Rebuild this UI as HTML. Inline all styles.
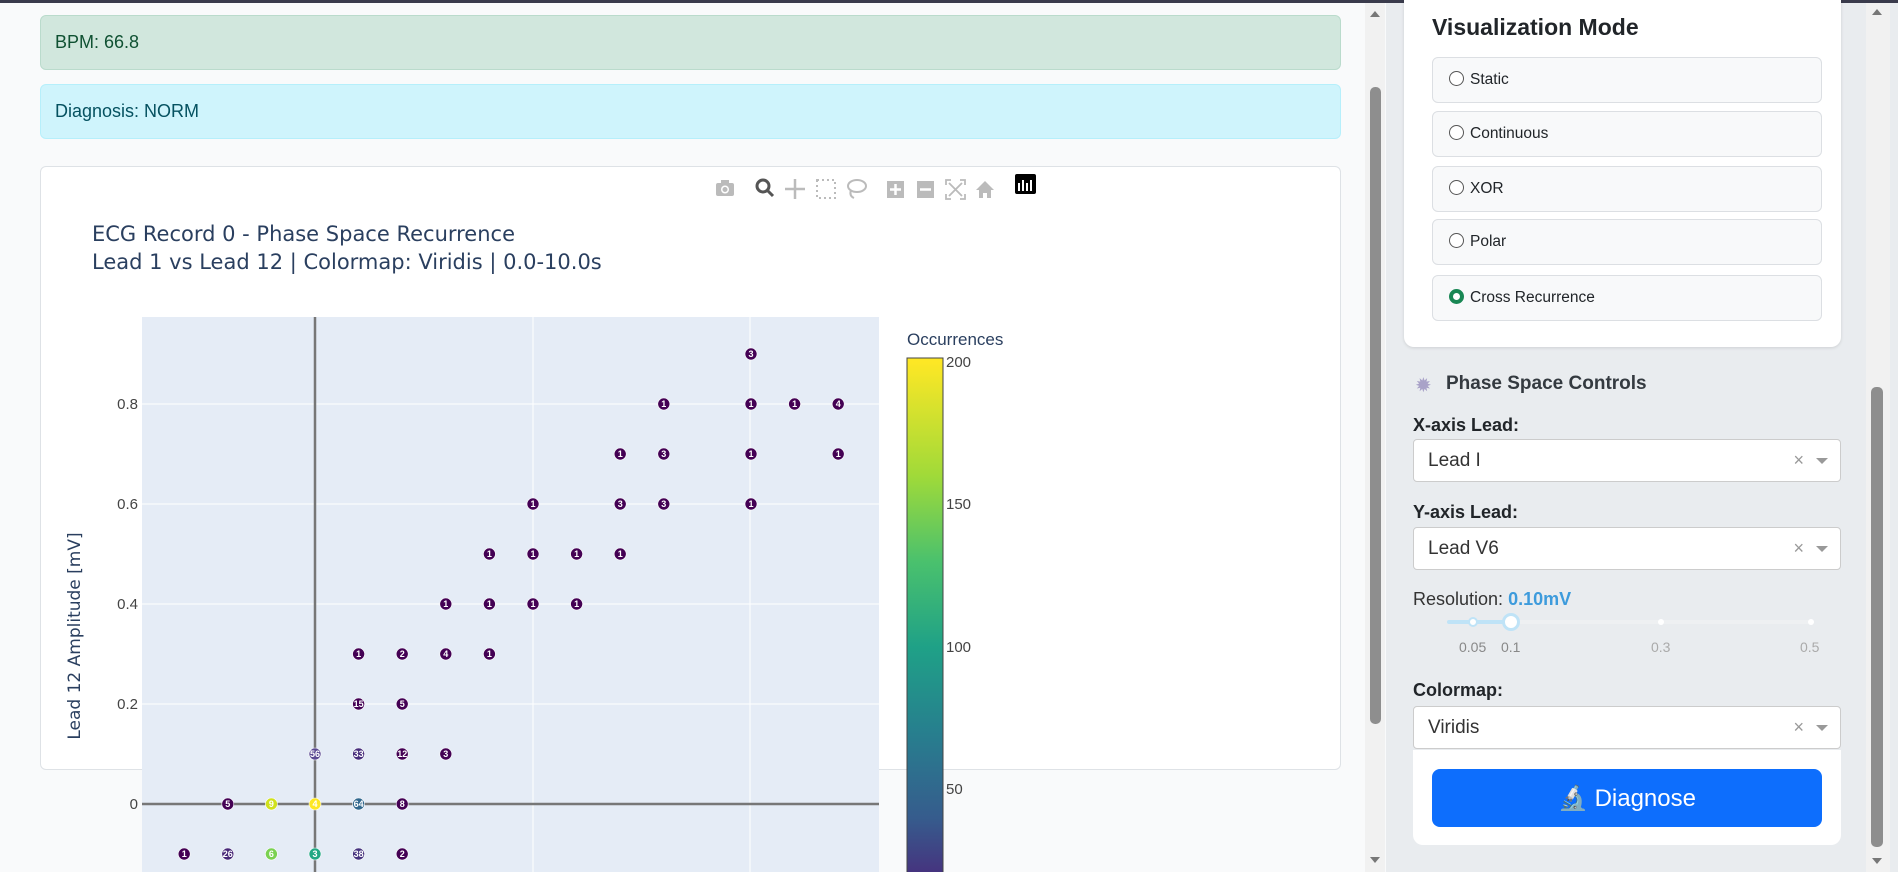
<!DOCTYPE html>
<html><head><meta charset="utf-8"><style>
*{box-sizing:border-box;margin:0;padding:0}
body{width:1898px;height:872px;overflow:hidden;background:#fff;font-family:"Liberation Sans",sans-serif;position:relative}
.abs{position:absolute}
.alert{position:absolute;left:40px;width:1301px;border-radius:6px;font-size:18px;padding-left:14px;display:flex;align-items:center}
.radio{position:absolute;left:1432px;width:390px;height:46px;border:1px solid #dcdfe3;border-radius:6px;background:#f8f9fa;font-size:15.5px;color:#212529;display:flex;align-items:center;padding-left:37px}
.radio i{position:absolute;left:16px;top:13px;width:15px;height:15px;border:1px solid #555;border-radius:50%;background:#fff}
.lbl{position:absolute;left:1413px;font-size:18px;font-weight:bold;color:#212529}
.sel{position:absolute;left:1413px;width:428px;height:43px;background:#fff;border:1px solid #ccc;border-radius:4px;font-size:19px;color:#333;padding-left:14px;display:flex;align-items:center}
.sel .x{position:absolute;right:36px;top:10px;color:#999;font-size:18px}
.sel .c{position:absolute;right:12px;top:18px;border-left:6px solid transparent;border-right:6px solid transparent;border-top:6px solid #999}
</style></head><body>
<div class="abs" style="left:0;top:0;width:1898px;height:3px;background:#3a3b4c"></div>
<div class="abs" style="left:0;top:3px;width:1386px;height:869px;background:#f9fafb"></div>
<div class="alert" style="top:15px;height:55px;background:#d1e7dd;border:1px solid #badbcc;color:#0f5132">BPM: 66.8</div>
<div class="alert" style="top:84px;height:55px;background:#cff4fc;border:1px solid #b6effb;color:#055160">Diagnosis: NORM</div>
<div class="abs" style="left:40px;top:166px;width:1301px;height:604px;background:#fff;border:1px solid #dee2e6;border-radius:6px"></div>
<div class="abs" style="left:1365px;top:3px;width:20px;height:869px;background:#f1f1f1"></div>
<div class="abs" style="left:1370px;top:87px;width:11px;height:637px;background:#8e8e8e;border-radius:5px"></div>
<div class="abs" style="left:1370px;top:11px;border-left:5px solid transparent;border-right:5px solid transparent;border-bottom:6px solid #777"></div>
<div class="abs" style="left:1370px;top:857px;border-left:5px solid transparent;border-right:5px solid transparent;border-top:6px solid #777"></div>

<svg class="abs" style="left:0;top:0" width="1386" height="872">
<defs><linearGradient id="vir" gradientUnits="userSpaceOnUse" x1="0" y1="362" x2="0" y2="932">
<stop offset="0" stop-color="#fde725"/><stop offset="0.2" stop-color="#a0da39"/><stop offset="0.35" stop-color="#4ac16d"/><stop offset="0.5" stop-color="#1fa187"/><stop offset="0.65" stop-color="#277f8e"/><stop offset="0.8" stop-color="#365c8d"/><stop offset="0.9" stop-color="#46327e"/><stop offset="1" stop-color="#440154"/></linearGradient></defs>
<g fill="#bbb">
<rect x="716" y="183" width="18" height="13" rx="2"/><rect x="721" y="180" width="8" height="4"/><circle cx="725" cy="189.5" r="4" fill="#fff"/><circle cx="725" cy="189.5" r="2.5"/>
<circle cx="763" cy="186" r="6" fill="none" stroke="#555" stroke-width="3"/><line x1="767" y1="190" x2="773" y2="196" stroke="#555" stroke-width="3"/>
<path d="M795 179v20M785 189h20" stroke="#bbb" stroke-width="2.5"/>
<rect x="817" y="180" width="18" height="18" fill="none" stroke="#bbb" stroke-width="2" stroke-dasharray="2 3"/>
<ellipse cx="857" cy="186" rx="9" ry="6" fill="none" stroke="#bbb" stroke-width="2"/><path d="M851 190q-2 6 3 8" fill="none" stroke="#bbb" stroke-width="2"/>
<rect x="887" y="181" width="17" height="17"/><path d="M895.5 184v11M890 189.5h11" stroke="#fff" stroke-width="2.5"/>
<rect x="917" y="181" width="17" height="17"/><path d="M920 189.5h11" stroke="#fff" stroke-width="2.5"/>
<path d="M946 185v-5h5M960 180h5v5M965 194v5h-5M951 199h-5v-5M949 183l13 13M962 183l-13 13" fill="none" stroke="#bbb" stroke-width="1.8"/>
<path d="M976 190l9-9 9 9h-3v8h-4v-5h-4v5h-4v-8z"/>
</g>
<rect x="1015" y="174" width="21" height="20" rx="2" fill="#000"/><path d="M1019 183v8M1023 180v11M1027 183v8M1031 180v11" stroke="#fff" stroke-width="2"/>
<text x="92" y="241" font-family="DejaVu Sans" font-size="21" fill="#2a3f5f">ECG Record 0 - Phase Space Recurrence</text>
<text x="92" y="269" font-family="DejaVu Sans" font-size="21" fill="#2a3f5f">Lead 1 vs Lead 12 | Colormap: Viridis | 0.0-10.0s</text>
<rect x="142" y="317" width="737" height="560" fill="#e5ecf6"/>
<g stroke="#fff" stroke-width="1">
<line x1="142" y1="404" x2="879" y2="404"/><line x1="142" y1="504" x2="879" y2="504"/><line x1="142" y1="604" x2="879" y2="604"/><line x1="142" y1="704" x2="879" y2="704"/>
<line x1="533" y1="317" x2="533" y2="872"/><line x1="750" y1="317" x2="750" y2="872"/>
</g>
<line x1="142" y1="804" x2="879" y2="804" stroke="#777" stroke-width="2.5"/>
<line x1="315" y1="317" x2="315" y2="872" stroke="#777" stroke-width="2.5"/>
<g font-family="Liberation Sans" font-size="15" fill="#444" text-anchor="end">
<text x="138" y="409">0.8</text><text x="138" y="509">0.6</text><text x="138" y="609">0.4</text><text x="138" y="709">0.2</text><text x="138" y="809">0</text>
</g>
<text transform="translate(80,636) rotate(-90)" font-family="DejaVu Sans" font-size="17" fill="#2a3f5f" text-anchor="middle">Lead 12 Amplitude [mV]</text>
<g id="dots" font-family="Liberation Sans" font-size="9" font-weight="bold" fill="#fff" text-anchor="middle"></g>
<text x="907" y="345" font-family="Liberation Sans" font-size="17" fill="#2a3f5f">Occurrences</text>
<rect x="907" y="358" width="36" height="520" fill="url(#vir)" stroke="#444" stroke-width="1"/>
<g font-family="Liberation Sans" font-size="15" fill="#444">
<text x="946" y="367">200</text><text x="946" y="509">150</text><text x="946" y="652">100</text><text x="946" y="794">50</text>
</g>
</svg>

<div class="abs" style="left:1386px;top:3px;width:512px;height:869px;background:#e9ecef"></div>
<div class="abs" style="left:1404px;top:0;width:437px;height:347px;background:#fff;border-radius:0 0 10px 10px;box-shadow:0 1px 3px rgba(0,0,0,.12)"></div>
<div class="abs" style="left:1432px;top:14px;font-size:23px;font-weight:bold;color:#212529">Visualization Mode</div>
<div class="radio" style="top:57px"><i></i>Static</div>
<div class="radio" style="top:111px"><i></i>Continuous</div>
<div class="radio" style="top:166px"><i></i>XOR</div>
<div class="radio" style="top:219px"><i></i>Polar</div>
<div class="radio" style="top:275px"><i style="border:4px solid #198754;background:#fff"></i>Cross Recurrence</div>
<div class="abs" style="left:1415px;top:373px;font-size:20px;color:#a9a2c8">✹</div>
<div class="abs" style="left:1446px;top:373px;font-size:19px;font-weight:bold;color:#343a40">Phase Space Controls</div>
<div class="lbl" style="top:415px">X-axis Lead:</div>
<div class="sel" style="top:439px">Lead I<span class="x">×</span><span class="c"></span></div>
<div class="lbl" style="top:502px">Y-axis Lead:</div>
<div class="sel" style="top:527px">Lead V6<span class="x">×</span><span class="c"></span></div>
<div class="abs" style="left:1413px;top:589px;font-size:18px;color:#333">Resolution: <b style="color:#3d9bdc">0.10mV</b></div>
<div class="abs" style="left:1447px;top:620px;width:364px;height:4px;background:#eef0f2;border-radius:2px"></div>
<div class="abs" style="left:1447px;top:620px;width:64px;height:4px;background:#bfe3f7;border-radius:2px"></div>
<div class="abs" style="left:1468px;top:617px;width:10px;height:10px;border:2px solid #bfe3f7;background:#fff;border-radius:50%"></div>
<div class="abs" style="left:1502px;top:613px;width:18px;height:18px;border:3px solid #bfe3f7;background:#fff;border-radius:50%"></div>
<div class="abs" style="left:1658px;top:619px;width:6px;height:6px;background:#fff;border-radius:50%"></div>
<div class="abs" style="left:1808px;top:619px;width:6px;height:6px;background:#fff;border-radius:50%"></div>
<div class="abs" style="left:1459px;top:639px;font-size:14px;color:#888">0.05</div>
<div class="abs" style="left:1501px;top:639px;font-size:14px;color:#888">0.1</div>
<div class="abs" style="left:1651px;top:639px;font-size:14px;color:#aaa">0.3</div>
<div class="abs" style="left:1800px;top:639px;font-size:14px;color:#aaa">0.5</div>
<div class="lbl" style="top:680px">Colormap:</div>
<div class="sel" style="top:706px">Viridis<span class="x">×</span><span class="c"></span></div>
<div class="abs" style="left:1413px;top:750px;width:428px;height:95px;background:#fff;border-radius:0 0 10px 10px"></div>
<div class="abs" style="left:1432px;top:769px;width:390px;height:58px;background:#0d6efd;border-radius:8px;color:#fff;font-size:24px;display:flex;align-items:center;justify-content:center">🔬&nbsp;Diagnose</div>
<div class="abs" style="left:1866px;top:3px;width:24px;height:869px;background:#f1f1f1"></div>
<div class="abs" style="left:1871px;top:387px;width:12px;height:460px;background:#8e8e8e;border-radius:5px"></div>
<div class="abs" style="left:1872px;top:9px;border-left:5px solid transparent;border-right:5px solid transparent;border-bottom:6px solid #777"></div>
<div class="abs" style="left:1872px;top:858px;border-left:5px solid transparent;border-right:5px solid transparent;border-top:6px solid #777"></div>
<script>
var P="#440154",d=[[13,.9,"3"],[11,.8,"1"],[13,.8,"1"],[14,.8,"1"],[15,.8,"4"],[10,.7,"1"],[11,.7,"3"],[13,.7,"1"],[15,.7,"1"],
[8,.6,"1"],[10,.6,"3"],[11,.6,"3"],[13,.6,"1"],[7,.5,"1"],[8,.5,"1"],[9,.5,"1"],[10,.5,"1"],[6,.4,"1"],[7,.4,"1"],[8,.4,"1"],[9,.4,"1"],
[4,.3,"1"],[5,.3,"2"],[6,.3,"4"],[7,.3,"1"],[4,.2,"15"],[5,.2,"5"],[3,.1,"56","#5b4a93"],[4,.1,"33","#472d7b"],[5,.1,"12"],[6,.1,"3"],
[1,0,"5"],[2,0,"9","#d0e11c"],[3,0,"4","#fde725"],[4,0,"64","#31688e"],[5,0,"8"],
[0,-.1,"1"],[1,-.1,"26","#482878"],[2,-.1,"6","#7ad151"],[3,-.1,"3","#22a884"],[4,-.1,"38","#46337e"],[5,-.1,"2"]];
var g=document.getElementById("dots"),h="";
d.forEach(function(e){var x=315+43.6*(e[0]-3),y=804-500*e[1];h+='<circle cx="'+x+'" cy="'+y+'" r="6" fill="'+(e[3]||P)+'" stroke="#fff" stroke-width="0.6"/><text x="'+x+'" y="'+(y+3.2)+'">'+e[2]+'</text>';});
g.innerHTML=h;
</script>
</body></html>
